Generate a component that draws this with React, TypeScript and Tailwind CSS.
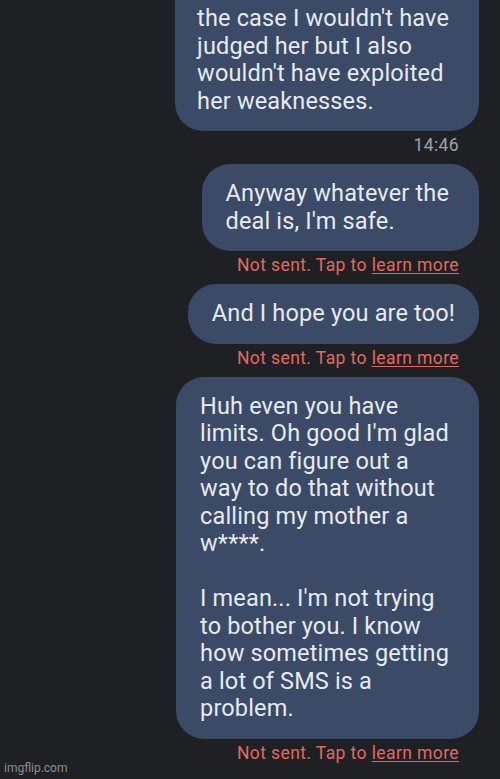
import React from 'react';

interface Message {
  id: number;
  lines: string[];
  status: 'time' | 'failed';
  time?: string;
  cut?: boolean;
}

const messages: Message[] = [
  {
    id: 1,
    lines: [
      "the case I wouldn't have",
      'judged her but I also',
      "wouldn't have exploited",
      'her weaknesses.',
    ],
    status: 'time',
    time: '14:46',
    cut: true,
  },
  {
    id: 2,
    lines: ['Anyway whatever the', "deal is, I'm safe."],
    status: 'failed',
  },
  {
    id: 3,
    lines: ['And I hope you are too!'],
    status: 'failed',
  },
  {
    id: 4,
    lines: [
      'Huh even you have',
      "limits. Oh good I'm glad",
      'you can figure out a',
      'way to do that without',
      'calling my mother a',
      'w****.',
      '',
      "I mean... I'm not trying",
      'to bother you. I know',
      'how sometimes getting',
      'a lot of SMS is a',
      'problem.',
    ],
    status: 'failed',
  },
];

const Bubble: React.FC<{ message: Message }> = ({ message }) => {
  // wrapped bubbles keep a bit of extra room on the right, like the Android text view
  const wrapped = message.lines.length > 1;
  let bubbleClass = 'bg-[#3a4a67] text-[#e7eaf0] rounded-[28px] pl-6 pr-6 py-4';
  if (message.cut) {
    bubbleClass = 'bg-[#3a4a67] text-[#e7eaf0] rounded-b-[28px] pl-[22px] pr-[30px] pt-[5px] pb-4';
  } else if (wrapped) {
    bubbleClass = 'bg-[#3a4a67] text-[#e7eaf0] rounded-[28px] pl-6 pr-[30px] py-4';
  }

  return (
    <div className="flex flex-col items-end">
      <div className={bubbleClass}>
        {message.lines.map((line, i) => (
          <div key={i} className="text-[23.5px] leading-[27.5px] tracking-[0.15px] whitespace-pre">
            {line === '' ? '\u00a0' : line}
          </div>
        ))}
      </div>
      <div className="mt-1 mr-5 text-[17.5px] leading-5 tracking-[0.4px]">
        {message.status === 'time' ? (
          <span className="text-[#9ea2a8]">{message.time}</span>
        ) : (
          <span className="text-[#e3695f]">
            Not sent. Tap to <span className="underline underline-offset-2">learn more</span>
          </span>
        )}
      </div>
    </div>
  );
};

const App: React.FC = () => {
  return (
    <div
      className="relative w-[500px] h-[779px] overflow-hidden bg-[#1f2023]"
      style={{ fontFamily: 'Roboto, "Noto Sans", sans-serif' }}
    >
      <div className="flex flex-col gap-[9px] pr-[21px]">
        {messages.map((m) => (
          <Bubble key={m.id} message={m} />
        ))}
      </div>
      <div className="absolute left-1 bottom-[2px] text-[12px] text-[#8c8d90]">imgflip.com</div>
    </div>
  );
};

export default App;
